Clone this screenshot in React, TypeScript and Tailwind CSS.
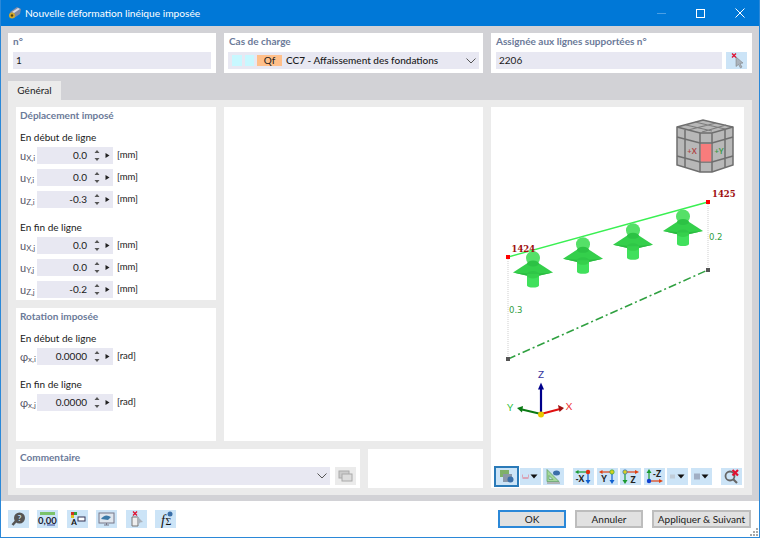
import React from "react";

const FONT = "font-['Lato',sans-serif]";

function Spin({ v, u }: { v: string; u: string }) {
  return (
    <div className="flex items-center h-[17px]">
      <div className="w-[76px] h-[17px] bg-[#e8e8f2] flex items-center text-[#1a1a1a] text-[10px]">
        <span className="w-[50px] text-right">{v}</span>
        <svg width="26" height="17" viewBox="0 0 26 17">
          <path d="M7.500 6l2.500-3 2.500 3zM7.500 11l2.500 3 2.500-3z" fill="#555" />
          <path d="M18.500 6l4 2.500-4 2.500z" fill="#222" />
        </svg>
      </div>
      <span className="ml-1 text-[9.5px] text-[#1a1a1a]">{u}</span>
    </div>
  );
}

function Row({ a, b, v, u }: { a: string; b: string; v: string; u: string }) {
  return (
    <div className="flex items-center h-[17px]">
      <span className="w-[17px] text-[#555566] text-[11px] leading-none whitespace-nowrap">
        {a}
        <span className="text-[8px] relative top-[1px]">{b}</span>
      </span>
      <Spin v={v} u={u} />
    </div>
  );
}

function Heading({ children }: { children: React.ReactNode }) {
  return <div className="text-[10px] font-bold text-[#6b7a99] leading-[14px]">{children}</div>;
}
function Sub({ children }: { children: React.ReactNode }) {
  return <div className="text-[10px] text-[#1a1a1a] leading-[14px]">{children}</div>;
}

function Support({ x, y }: { x: number; y: number }) {
  return (
    <g transform={`translate(${x} ${y})`}>
      <path d="M-6 0H6V13A6 2 0 0 1 -6 13z" fill="#40e05c" />
      <path d="M-20 0L0-13L20 0L0 4.500z" fill="#34cf4b" />
      <path d="M-20 0L0 4.500L20 0L0 1.500z" fill="#2bbb41" />
      <ellipse cx="0" cy="1.500" rx="6" ry="3" fill="#2fc647" />
      <path d="M-6 1.500V3A6 3 0 0 0 6 3V1.500z" fill="#35d04c" />
      <circle cx="0" cy="-14.500" r="7" fill="#55e068" />
      <ellipse cx="0" cy="-9" rx="6" ry="3" fill="#2cc244" />
    </g>
  );
}

function Viewport() {
  return (
    <svg className="absolute inset-0" width="253" height="381" viewBox="491 107 253 381">
      {/* view cube */}
      <path d="M677 127L703 120L733 127L733 165L712 172L700 172L677 165z" fill="#b8b8b8" stroke="#6e6e6e" strokeWidth="1.500" />
      <path d="M677 127L700 133H712L733 127M700 133V172M712 133V172" fill="none" stroke="#6e6e6e" strokeWidth="1.500" />
      <path d="M677 137L700 143H712L733 137M677 156L700 162H712L733 156M685 130V167M725 130V167" fill="none" stroke="#6e6e6e" strokeWidth="1.500" />
      <path d="M686 125L712 131M695 122L725 129M716 123L688 130M726 125L702 132" fill="none" stroke="#7c7c7c" strokeWidth="1.100" />
      <rect x="700.800" y="144" width="10.400" height="17.500" fill="#f87c7c" />
      <text x="692" y="154" fontSize="7.500" fill="#b04848" fontWeight="700" textAnchor="middle">+X</text>
      <text x="719" y="154" fontSize="7.500" fill="#3a9a48" fontWeight="700" textAnchor="middle">+Y</text>

      <line x1="508" y1="257" x2="708" y2="202" stroke="#39f052" strokeWidth="1.400" />
      <line x1="508" y1="257" x2="508" y2="359" stroke="#cfcfcf" strokeDasharray="1 1" />
      <line x1="708" y1="202" x2="708" y2="270" stroke="#cfcfcf" strokeDasharray="1 1" />
      <line x1="508" y1="359" x2="708" y2="270" stroke="#2fa040" strokeWidth="1.500" strokeDasharray="8 3 2 3" />

      <Support x={533} y={272.5} />
      <Support x={583} y={258.8} />
      <Support x={633} y={244.8} />
      <Support x={683} y={231} />

      <rect x="506" y="255" width="4" height="4" fill="#f00" />
      <rect x="706" y="200" width="4" height="4" fill="#f00" />
      <rect x="506" y="357" width="4" height="4" fill="#555" />
      <rect x="706" y="268" width="4" height="4" fill="#555" />

      <text x="511.500" y="252" fontSize="8.500" fontWeight="700" fill="#a01010" fontFamily="'DejaVu Serif',serif">1424</text>
      <text x="712" y="197" fontSize="8.500" fontWeight="700" fill="#a01010" fontFamily="'DejaVu Serif',serif">1425</text>
      <text x="709" y="240" fontSize="8.500" fill="#2f9e3f" fontFamily="'DejaVu Sans',sans-serif">0.2</text>
      <text x="509" y="313" fontSize="8.500" fill="#2f9e3f" fontFamily="'DejaVu Sans',sans-serif">0.3</text>

      {/* axes */}
      <line x1="541" y1="414" x2="541" y2="388" stroke="#00008b" strokeWidth="2.200" />
      <path d="M541 382.500l3 7h-6z" fill="#00008b" />
      <line x1="541" y1="414" x2="560" y2="409" stroke="#e01010" strokeWidth="2" />
      <path d="M564 408l-6-3 1.500 7z" fill="#a01010" />
      <line x1="541" y1="414" x2="522" y2="409.500" stroke="#0b7a14" strokeWidth="2" />
      <path d="M517 408l6-2-1 6.500z" fill="#0b7a14" />
      <circle cx="541" cy="414.500" r="3" fill="#e8c800" />
      <text x="541" y="378" fontSize="10" fill="#3838a0" textAnchor="middle">Z</text>
      <text x="569" y="410" fontSize="10" fill="#f03030" textAnchor="middle">X</text>
      <text x="510" y="411" fontSize="10" fill="#30c040" textAnchor="middle">Y</text>
    </svg>
  );
}

function ToolBtn({ children, active = false }: { children: React.ReactNode; active?: boolean }) {
  return (
    <div className={`w-[21px] h-[17px] bg-[#cce4f7] flex items-center justify-center shrink-0 ${active ? "outline-2 outline-[#2a7ab8]" : ""}`}>
      <svg width="21" height="17" viewBox="0 0 21 17">{children}</svg>
    </div>
  );
}

function Drop({ children }: { children: React.ReactNode }) {
  return (
    <div className="w-[21px] h-[17px] bg-[#cce4f7] flex items-center shrink-0">
      <svg width="21" height="17" viewBox="0 0 21 17">
        {children}
        <path d="M10.500 6.500h7l-3.500 4z" fill="#111" />
      </svg>
    </div>
  );
}

const T = ({ x, y, s }: { x: number; y: number; s: string }) => (
  <text x={x} y={y} fontSize="8.500" fontWeight="900" fill="#222" textAnchor="middle">{s}</text>
);

export default function App() {
  return (
    <div className={`${FONT} relative w-[760px] h-[538px] overflow-hidden flex flex-col bg-[#d2d2d6] border border-t-0 border-[#2b88d8] text-[#1a1a1a]`}>
      <div className="h-[26px] bg-[#0078d7] flex items-center shrink-0 -mx-px pl-[8px]">
        <svg width="14" height="14" viewBox="0 0 14 14">
          <path d="M2 6l7-5 4 2-1 5-6 4z" fill="#7f8aa6" />
          <path d="M4 6l6-4 2 1-6 4z" fill="#d8dbe6" />
          <circle cx="4" cy="9.500" r="3" fill="#d4a92a" />
          <circle cx="4" cy="9.500" r="1.200" fill="#54420c" />
        </svg>
        <span className="ml-[3px] text-white text-[10.2px] leading-none">Nouvelle déformation linéique imposée</span>
        <div className="ml-auto flex items-center">
          <span className="w-[39px] h-[26px] flex items-center justify-center">
            <span className="w-[9px] h-px bg-[#4b9fe4]" />
          </span>
          <span className="w-[39px] h-[26px] flex items-center justify-center">
            <span className="w-[9px] h-[9px] border border-white" />
          </span>
          <span className="w-[40px] h-[26px] flex items-center justify-center">
            <svg width="10" height="10" viewBox="0 0 10 10"><path d="M.500.500l9 9M9.500.500l-9 9" stroke="#fff" fill="none" /></svg>
          </span>
        </div>
      </div>

      <div className="flex-1 flex flex-col px-[7px] pt-[7px] min-h-0">
        {/* top cards */}
        <div className="flex gap-2 h-[40px] shrink-0">
          <div className="w-[208px] bg-white px-[5px] pt-px">
            <Heading>n°</Heading>
            <div className="mt-[4px] h-[17px] bg-[#e8e8f2] text-[10px] leading-[17px] px-[3px]">1</div>
          </div>
          <div className="w-[259px] bg-white px-[4px] pt-px">
            <div className="pl-px"><Heading>Cas de charge</Heading></div>
            <div className="mt-[4px] h-[17px] bg-[#e8e8f2] flex items-center text-[10px] pl-[4px] pr-[3px]">
              <span className="w-[10px] h-[11px] bg-[#c8f8ff]" />
              <span className="w-[9px] h-[11px] bg-[#c8f8ff] ml-[3px]" />
              <span className="w-[25px] h-[11px] bg-[#ffbf8a] ml-[3px] text-center leading-[11px]">Qf</span>
              <span className="ml-[4px] font-medium">CC7 - Affaissement des fondations</span>
              <svg className="ml-auto" width="10" height="6" viewBox="0 0 10 6"><path d="M.500.500L5 5l4.500-4.500" stroke="#555" fill="none" /></svg>
            </div>
          </div>
          <div className="w-[261px] bg-white px-[5px] pt-px">
            <Heading>Assignée aux lignes supportées n°</Heading>
            <div className="mt-[4px] flex gap-1">
              <div className="flex-1 h-[17px] bg-[#e8e8f2] text-[10px] leading-[17px] px-[3px]">2206</div>
              <div className="w-[21px] h-[17px] bg-[#cce4f7] flex items-center justify-center">
                <svg width="21" height="17" viewBox="0 0 21 17">
                  <path d="M10 5l7 6-3 .5 2 3.500-1.500 1-2-3.500-2.500 2z" fill="#aab2bb" stroke="#777" strokeWidth=".5" />
                  <path d="M6 1.500l4 4M10 1.500l-4 4" stroke="#e01030" strokeWidth="1.300" />
                </svg>
              </div>
            </div>
          </div>
        </div>

        {/* tab */}
        <div className="mt-2 h-[19px] w-[53px] shrink-0 bg-[#ebebeb] text-[10px] leading-[19px] text-center">Général</div>

        {/* panel */}
        <div className="h-[395px] w-[744px] shrink-0 bg-[#ebebeb] pt-[7px] pl-2 pr-2 flex gap-2">
          <div className="w-[467px] flex flex-col gap-2">
            <div className="flex gap-2 h-[334px]">
              <div className="w-[200px] flex flex-col gap-2">
                <div className="h-[193px] bg-white px-[4px] pt-px">
                  <Heading>Déplacement imposé</Heading>
                  <div className="mt-[8px]"><Sub>En début de ligne</Sub></div>
                  <div className="mt-[3px] flex flex-col gap-[5px]">
                    <Row a="u" b="X,i" v="0.0" u="[mm]" />
                    <Row a="u" b="Y,i" v="0.0" u="[mm]" />
                    <Row a="u" b="Z,i" v="-0.3" u="[mm]" />
                  </div>
                  <div className="mt-[12px]"><Sub>En fin de ligne</Sub></div>
                  <div className="mt-[3px] flex flex-col gap-[5px]">
                    <Row a="u" b="X,j" v="0.0" u="[mm]" />
                    <Row a="u" b="Y,j" v="0.0" u="[mm]" />
                    <Row a="u" b="Z,j" v="-0.2" u="[mm]" />
                  </div>
                </div>
                <div className="flex-1 bg-white px-[4px] pt-px">
                  <Heading>Rotation imposée</Heading>
                  <div className="mt-[8px]"><Sub>En début de ligne</Sub></div>
                  <div className="mt-[3px]"><Row a="φ" b="x,i" v="0.0000" u="[rad]" /></div>
                  <div className="mt-[12px]"><Sub>En fin de ligne</Sub></div>
                  <div className="mt-[3px]"><Row a="φ" b="x,j" v="0.0000" u="[rad]" /></div>
                </div>
              </div>
              <div className="flex-1 bg-white" />
            </div>
            <div className="flex gap-2 h-[39px]">
              <div className="w-[344px] bg-white px-[4px] pt-px">
                <Heading>Commentaire</Heading>
                <div className="mt-[3px] flex gap-[5px]">
                  <div className="w-[310px] h-[18px] bg-[#e8e8f2] flex items-center justify-end pr-[3px]">
                    <svg width="10" height="6" viewBox="0 0 10 6"><path d="M.500.500L5 5l4.500-4.500" stroke="#555" fill="none" /></svg>
                  </div>
                  <div className="w-[21px] h-[18px] bg-[#ebebeb] flex items-center justify-center">
                    <svg width="15" height="12" viewBox="0 0 15 12">
                      <rect x="1" y="1" width="10" height="7" fill="#ccc" stroke="#aaa" />
                      <rect x="4" y="4" width="10" height="7" fill="#ddd" stroke="#aaa" />
                    </svg>
                  </div>
                </div>
              </div>
              <div className="flex-1 bg-white" />
            </div>
          </div>

          <div className="relative w-[253px] h-[381px] bg-white">
            <Viewport />
            <div className="absolute left-[5px] top-[361px] flex items-center gap-[2.5px]">
              <ToolBtn active>
                <rect x="4" y="2" width="9" height="7" fill="#7fb069" />
                <rect x="7" y="6" width="9" height="8" fill="#8a97a8" />
                <circle cx="14.500" cy="11.500" r="3" fill="#3a6ea8" />
              </ToolBtn>
              <Drop><path d="M2.500 6.500v3h6v-3M2.500 10.500h6" stroke="#d9a6b8" fill="none" /></Drop>
              <ToolBtn>
                <path d="M4 1.500v12h12zM6 7.500v4h4z" fill="#a4d89c" fillRule="evenodd" stroke="#5a9a60" strokeWidth=".7" />
                <path d="M4 14h13v2H4z" fill="#b0b4b8" />
                <ellipse cx="13.500" cy="5" rx="3.500" ry="2.500" fill="#3a6ea8" />
              </ToolBtn>
              <span className="w-[4px]" />
              <ToolBtn>
                <path d="M5 4h10" stroke="#1a9a30" strokeWidth="1.200" /><path d="M2 4l3.500-2v4z" fill="#1a9a30" />
                <path d="M15 4v9" stroke="#1060d0" strokeWidth="1.200" /><path d="M15 16l-2.500-4h5z" fill="#1060d0" />
                <circle cx="15" cy="4" r="2.200" fill="#e03010" />
                <T x={7} y={14} s="-X" />
              </ToolBtn>
              <ToolBtn>
                <path d="M5 4h10" stroke="#e04010" strokeWidth="1.200" /><path d="M2 4l3.500-2v4z" fill="#e04010" />
                <path d="M15 4v9" stroke="#1060d0" strokeWidth="1.200" /><path d="M15 16l-2.500-4h5z" fill="#1060d0" />
                <circle cx="15" cy="4" r="2.200" fill="#d8d020" stroke="#1a9a30" strokeWidth=".6" />
                <T x={7} y={14} s="Y" />
              </ToolBtn>
              <ToolBtn>
                <path d="M5 4h10" stroke="#e04010" strokeWidth="1.200" /><path d="M19 4l-4-2v4z" fill="#e04010" />
                <path d="M5 4v9" stroke="#1a9a30" strokeWidth="1.200" /><path d="M5 16l-2.500-4h5z" fill="#1a9a30" />
                <circle cx="5" cy="4" r="2.200" fill="#d8d020" stroke="#1060d0" strokeWidth=".6" />
                <T x={13} y={14.500} s="Z" />
              </ToolBtn>
              <ToolBtn>
                <path d="M5 13V4" stroke="#1a9a30" strokeWidth="1.200" /><path d="M5 1l-2.500 4h5z" fill="#1a9a30" />
                <path d="M5 13h10" stroke="#e04010" strokeWidth="1.200" /><path d="M19 13l-4-2v4z" fill="#e04010" />
                <circle cx="5" cy="13" r="2.200" fill="#1040d0" />
                <T x={13} y={9} s="-Z" />
              </ToolBtn>
              <Drop><rect x="3" y="6.500" width="5" height="4" fill="#c0ccd8" /></Drop>
              <Drop><rect x="3" y="5.500" width="6" height="6" fill="#a0aec4" /></Drop>
              <span className="w-[4px]" />
              <ToolBtn>
                <circle cx="9" cy="8" r="4.500" fill="none" stroke="#666" strokeWidth="1.800" />
                <path d="M12 11l4 4" stroke="#666" strokeWidth="2.200" />
                <path d="M11.500 2l5.500 5.500M17 2l-5.500 5.500" stroke="#e01030" strokeWidth="2.200" />
              </ToolBtn>
            </div>
          </div>
        </div>
      </div>

      {/* footer */}
      <div className="h-[36px] bg-white shrink-0 flex items-center pl-[7px] pr-[8px]">
        <div className="flex gap-[8.4px]">
          {[0, 1, 2, 3, 4, 5].map((i) => (
            <div key={i} className="w-[21px] h-[18px] bg-[#cce4f7] flex items-center justify-center">
              <svg width="21" height="18" viewBox="0 0 21 18">
                {i === 0 && <><circle cx="11.500" cy="8" r="5.500" fill="#555" /><path d="M8 11l-3.500 4" stroke="#555" strokeWidth="2.500" /><text x="11.500" y="11" fontSize="8" fill="#cce4f7" fontWeight="700" textAnchor="middle">?</text></>}
                {i === 1 && <><rect x="3" y="2" width="15" height="3" fill="#7cc36a" /><text x="10.500" y="14" fontSize="9.500" fontWeight="700" fill="#223" textAnchor="middle">0,00</text><path d="M10 15h8" stroke="#3048a0" /></>}
                {i === 2 && <><rect x="4" y="2" width="3" height="3" fill="#d03020" /><rect x="7" y="2" width="3" height="3" fill="#30a040" /><rect x="4" y="5" width="3" height="3" fill="#e0c020" /><text x="7" y="15" fontSize="8" fontWeight="700" fill="#111" textAnchor="middle">A</text><rect x="11" y="7" width="7" height="4" fill="#fff" stroke="#335" /></>}
                {i === 3 && <><rect x="3" y="3" width="15" height="10" fill="#dfe6ee" stroke="#778" /><path d="M5 9q4-6 10-2l-3 3z" fill="#3c7aa8" /><path d="M8 15h5M10.500 13v2" stroke="#778" /></>}
                {i === 4 && <><path d="M6 7h6v9H6z" fill="#eee" stroke="#777" /><path d="M11 6l6 6-3 .5-2 3z" fill="#aab2bb" /><path d="M7 1.500l4 4M11 1.500l-4 4" stroke="#e01030" strokeWidth="1.300" /></>}
                {i === 5 && <><text x="8" y="15" fontSize="14" fontStyle="italic" fontFamily="'Liberation Serif',serif" fill="#111" textAnchor="middle">f</text><text x="13.500" y="15" fontSize="10" fontFamily="'Liberation Serif',serif" fill="#111" textAnchor="middle">Σ</text><circle cx="15" cy="4" r="2.500" fill="#3a6ea8" /></>}
              </svg>
            </div>
          ))}
        </div>
        <div className="ml-auto flex gap-[9px] text-[10px]">
          <div className="w-[68px] h-[18px] bg-[#e1e1e1] border-2 border-[#2b88d8] flex items-center justify-center">OK</div>
          <div className="w-[68px] h-[18px] bg-[#e1e1e1] border-2 border-[#bdbdbd] flex items-center justify-center">Annuler</div>
          <div className="w-[99px] h-[18px] bg-[#e1e1e1] border-2 border-[#bdbdbd] flex items-center justify-center">Appliquer &amp; Suivant</div>
        </div>
      </div>

      {/* resize grip */}
      <svg className="absolute right-px bottom-px" width="8" height="8" viewBox="0 0 8 8">
        <path d="M6 0h2v2H6zM3 3h2v2H3zM6 3h2v2H6zM0 6h2v2H0zM3 6h2v2H3zM6 6h2v2H6z" fill="#a8a8a8" />
      </svg>
    </div>
  );
}
